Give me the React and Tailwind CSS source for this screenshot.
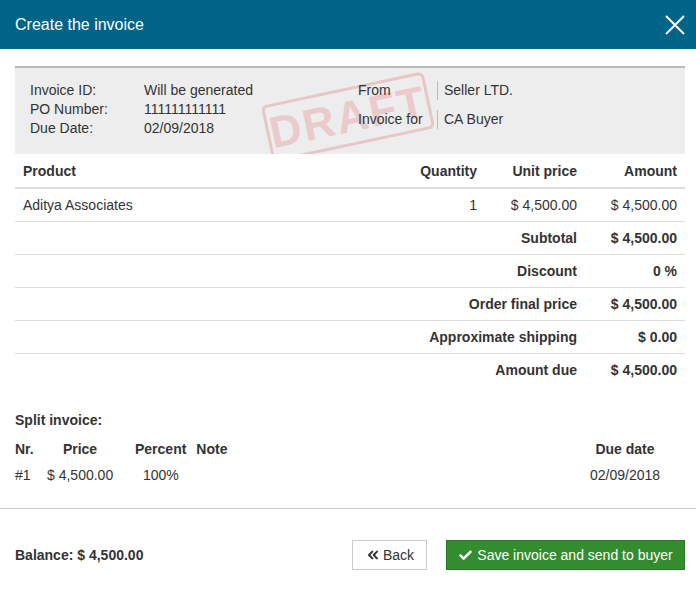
import { ChevronsLeft, Check } from "lucide-react";

const items = [{ product: "Aditya Associates", qty: 1, price: "$ 4,500.00", amount: "$ 4,500.00" }];

const totals = [
  ["Subtotal", "$ 4,500.00"],
  ["Discount", "0 %"],
  ["Order final price", "$ 4,500.00"],
  ["Approximate shipping", "$ 0.00"],
  ["Amount due", "$ 4,500.00"],
];

export default function App() {
  return (
    <div className="w-[696px] h-[592px] bg-white text-[#333] text-[14px] font-['Liberation_Sans',Arial,sans-serif] flex flex-col">
      {/* Modal header */}
      <div className="h-[49px] bg-[#006388] flex items-center justify-between pl-[15px] pr-[10px] shrink-0">
        <h1 className="text-white text-[16px]">Create the invoice</h1>
        <button className="w-[22px] h-[22px] flex items-center justify-center" aria-label="Close">
          <svg width="20" height="20" viewBox="0 0 20 20" stroke="white" strokeWidth="2" fill="none">
            <path d="M1 1L19 19M19 1L1 19" />
          </svg>
        </button>
      </div>

      <div className="pl-[15px] pr-[11px] pt-[17px]">
        {/* Invoice info */}
        <div className="relative bg-[#ededed] border-t-2 border-[#b8b8b8] h-[88px] pt-[13px] pl-[15px] flex overflow-hidden">
          <div className="absolute left-[250px] top-[20px] w-[166px] h-[58px] -rotate-12 border-[3px] border-[#e8c6c6] rounded-[6px] flex items-center justify-center">
            <span className="text-[44px] font-bold text-[#eaCaCa] tracking-[2px] leading-none">DRAFT</span>
          </div>
          <div className="relative w-[114px] leading-[19px]">
            <div>Invoice ID:</div>
            <div>PO Number:</div>
            <div>Due Date:</div>
          </div>
          <div className="relative w-[214px] leading-[19px]">
            <div>Will be generated</div>
            <div>111111111111</div>
            <div>02/09/2018</div>
          </div>
          <div className="relative leading-[19px] flex flex-col gap-[10px]">
            <div className="flex">
              <span className="w-[79px]">From</span>
              <span className="border-l border-[#bbb] pl-[6px]">Seller LTD.</span>
            </div>
            <div className="flex">
              <span className="w-[79px]">Invoice for</span>
              <span className="border-l border-[#bbb] pl-[6px]">CA Buyer</span>
            </div>
          </div>
        </div>

        {/* Products table */}
        <div className="grid grid-cols-[1fr_100px_100px_100px] h-[35px] pt-[2px] items-center font-bold border-b-2 border-[#ddd]">
          <div className="px-[8px]">Product</div>
          <div className="px-[8px] text-right">Quantity</div>
          <div className="px-[8px] text-right">Unit price</div>
          <div className="px-[8px] text-right">Amount</div>
        </div>
        {items.map((item) => (
          <div key={item.product} className="grid grid-cols-[1fr_100px_100px_100px] h-[33px] items-center border-b border-[#ddd]">
            <div className="px-[8px]">{item.product}</div>
            <div className="px-[8px] text-right">{item.qty}</div>
            <div className="px-[8px] text-right">{item.price}</div>
            <div className="px-[8px] text-right">{item.amount}</div>
          </div>
        ))}
        {totals.map(([label, value], i) => (
          <div
            key={label}
            className={`grid grid-cols-[1fr_100px] h-[33px] items-center font-bold ${
              i < totals.length - 1 ? "border-b border-[#ddd]" : ""
            }`}
          >
            <div className="px-[8px] text-right">{label}</div>
            <div className="px-[8px] text-right">{value}</div>
          </div>
        ))}

        {/* Split invoice */}
        <div className="mt-[23px] font-bold">Split invoice:</div>
        <div className="mt-[8px] flex items-center h-[20px] font-bold whitespace-nowrap">
          <span className="w-[32px]">Nr.</span>
          <span className="w-[66px] text-center">Price</span>
          <span className="ml-[22px]">Percent</span>
          <span className="ml-[10px]">Note</span>
          <span className="flex-1" />
          <span className="w-[90px] mr-[15px] text-center">Due date</span>
        </div>
        <div className="mt-[6px] flex items-center h-[20px] whitespace-nowrap">
          <span className="w-[32px]">#1</span>
          <span className="w-[66px] text-center">$ 4,500.00</span>
          <span className="ml-[30px]">100%</span>
          <span className="flex-1" />
          <span className="w-[90px] mr-[15px] text-center">02/09/2018</span>
        </div>
      </div>

      {/* Footer */}
      <div className="mt-[23px] border-t border-[#ccc] pl-[15px] pr-[11px] pt-[31px] flex items-center justify-between">
        <div className="font-bold">Balance: $ 4,500.00</div>
        <div className="flex items-center gap-[19px]">
          <button className="h-[30px] w-[75px] border border-[#ccc] bg-white flex items-center justify-center gap-[2px] text-[#333]">
            <ChevronsLeft size={16} strokeWidth={3} />
            <span>Back</span>
          </button>
          <button className="h-[30px] w-[239px] bg-[#338c2e] border border-[#2a7a26] text-white flex items-center justify-center gap-[4px]">
            <Check size={15} strokeWidth={4} />
            <span>Save invoice and send to buyer</span>
          </button>
        </div>
      </div>
    </div>
  );
}
